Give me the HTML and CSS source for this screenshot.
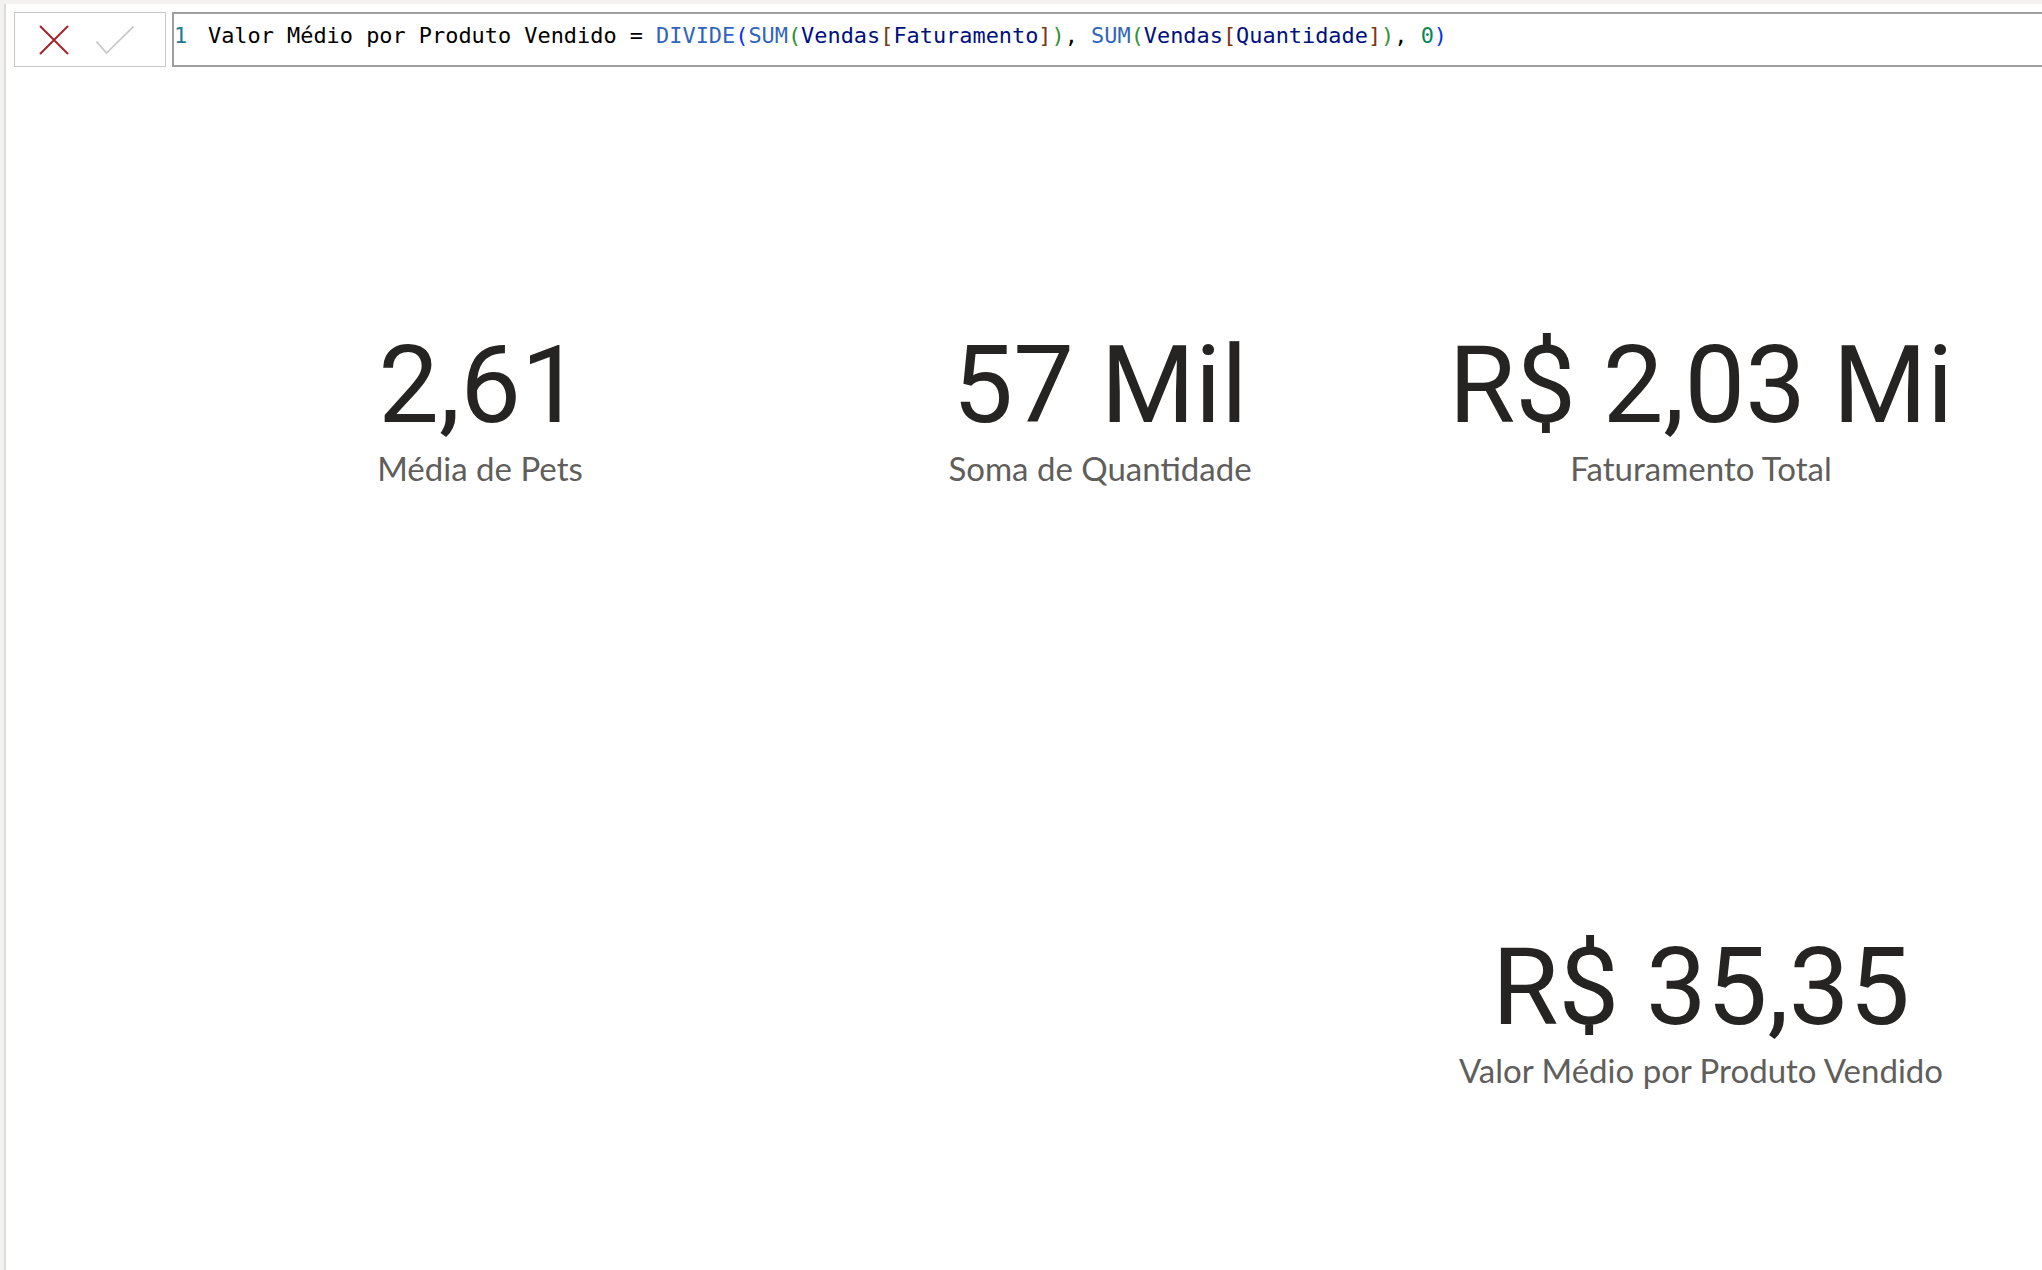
FILE: index.html
```html
<!DOCTYPE html>
<html lang="pt-BR">
<head>
    <meta charset="UTF-8">
    <meta name="viewport" content="width=device-width, initial-scale=1.0">
    <title>Relatório de Vendas</title>
    <link rel="stylesheet" href="styles.css">
</head>
<body>
    <div class="top-strip"></div>

    <div class="app">
        <div class="side-strip"></div>

        <div class="main">
            <!-- formula bar -->
            <div class="formula-bar">
                <div class="formula-actions">
                    <svg class="icon-cancel" width="30" height="30" viewBox="0 0 30 30">
                        <path d="M1 1 L29 29 M29 1 L1 29" />
                    </svg>
                    <svg class="icon-commit" width="38" height="28" viewBox="0 0 38 28">
                        <polyline points="0.5,15.5 10.5,27 37.5,0.5" />
                    </svg>
                </div>
                <div class="formula-editor">
                    <span class="line-number">1</span>
                    <code class="dax">Valor Médio por Produto Vendido = <span class="fn">DIVIDE</span><span class="br1">(</span><span class="fn">SUM</span><span class="br2">(</span><span class="ref">Vendas</span><span class="br3">[</span><span class="ref">Faturamento</span><span class="br3">]</span><span class="br2">)</span>, <span class="fn">SUM</span><span class="br2">(</span><span class="ref">Vendas</span><span class="br3">[</span><span class="ref">Quantidade</span><span class="br3">]</span><span class="br2">)</span>, <span class="num">0</span><span class="br1">)</span></code>
                </div>
            </div>

            <!-- report canvas -->
            <div class="canvas">
                <div class="card">
                    <div class="card-value">2,61</div>
                    <div class="card-label">Média de Pets</div>
                </div>
                <div class="card">
                    <div class="card-value">57 Mil</div>
                    <div class="card-label">Soma de Quantidade</div>
                </div>
                <div class="card">
                    <div class="card-value">R$ 2,03 Mi</div>
                    <div class="card-label">Faturamento Total</div>
                </div>
                <div class="card card-bottom">
                    <div class="card-value">R$ 35,35</div>
                    <div class="card-label">Valor Médio por Produto Vendido</div>
                </div>
            </div>
        </div>
    </div>
</body>
</html>
```

FILE: styles.css
```css
html, body {
    margin: 0;
    padding: 0;
    height: 100%;
    overflow: hidden;
    background: #ffffff;
}
body {
    font-family: "Segoe UI", Lato, sans-serif;
}
.top-strip {
    height: 4px;
    background: #f3f2f1;
}
.app {
    display: flex;
    height: calc(100% - 4px);
}
.side-strip {
    width: 4px;
    background: #f3f2f1;
    border-right: 2px solid #dedcda;
    flex: none;
}
.main {
    flex: 1;
    min-width: 0;
}

/* formula bar */
.formula-bar {
    display: flex;
    margin: 8px 0 0 8px;
    height: 55px;
    gap: 6px;
}
.formula-actions {
    box-sizing: border-box;
    width: 152px;
    border: 1px solid #c8c6c4;
    display: flex;
    align-items: center;
    padding-left: 24px;
    gap: 27px;
}
.icon-cancel path {
    stroke: #a4262c;
    stroke-width: 2;
    fill: none;
}
.icon-commit polyline {
    stroke: #c8c6c4;
    stroke-width: 1.6;
    fill: none;
}
.formula-editor {
    box-sizing: border-box;
    flex: 1;
    margin-right: -20px;
    border: 2px solid #a19f9d;
    padding-top: 9px;
    display: flex;
    align-items: flex-start;
    font-family: "DejaVu Sans Mono", "Liberation Mono", monospace;
    font-size: 21.9px;
    line-height: 26px;
    white-space: pre;
}
.line-number {
    width: 34px;
    color: #237893;
}
.dax {
    font-family: inherit;
    color: #000000;
}
.fn { color: #3165bb; }
.ref { color: #001080; }
.br1 { color: #0431fa; }
.br2 { color: #319331; }
.br3 { color: #7b3814; }
.num { color: #098658; }

/* report canvas */
.canvas {
    display: grid;
    grid-template-columns: 560px 680px 522px;
    row-gap: 444px;
    padding: 263px 0 0 194px;
}
.card {
    display: flex;
    flex-direction: column;
    align-items: center;
}
.card-bottom {
    grid-column: 3;
}
.card-value {
    font-family: Roboto, sans-serif;
    font-size: 108px;
    line-height: 110px;
    color: #252423;
}
.card-label {
    margin-top: 8px;
    font-size: 33px;
    line-height: 40px;
    color: #605e5c;
}
```
